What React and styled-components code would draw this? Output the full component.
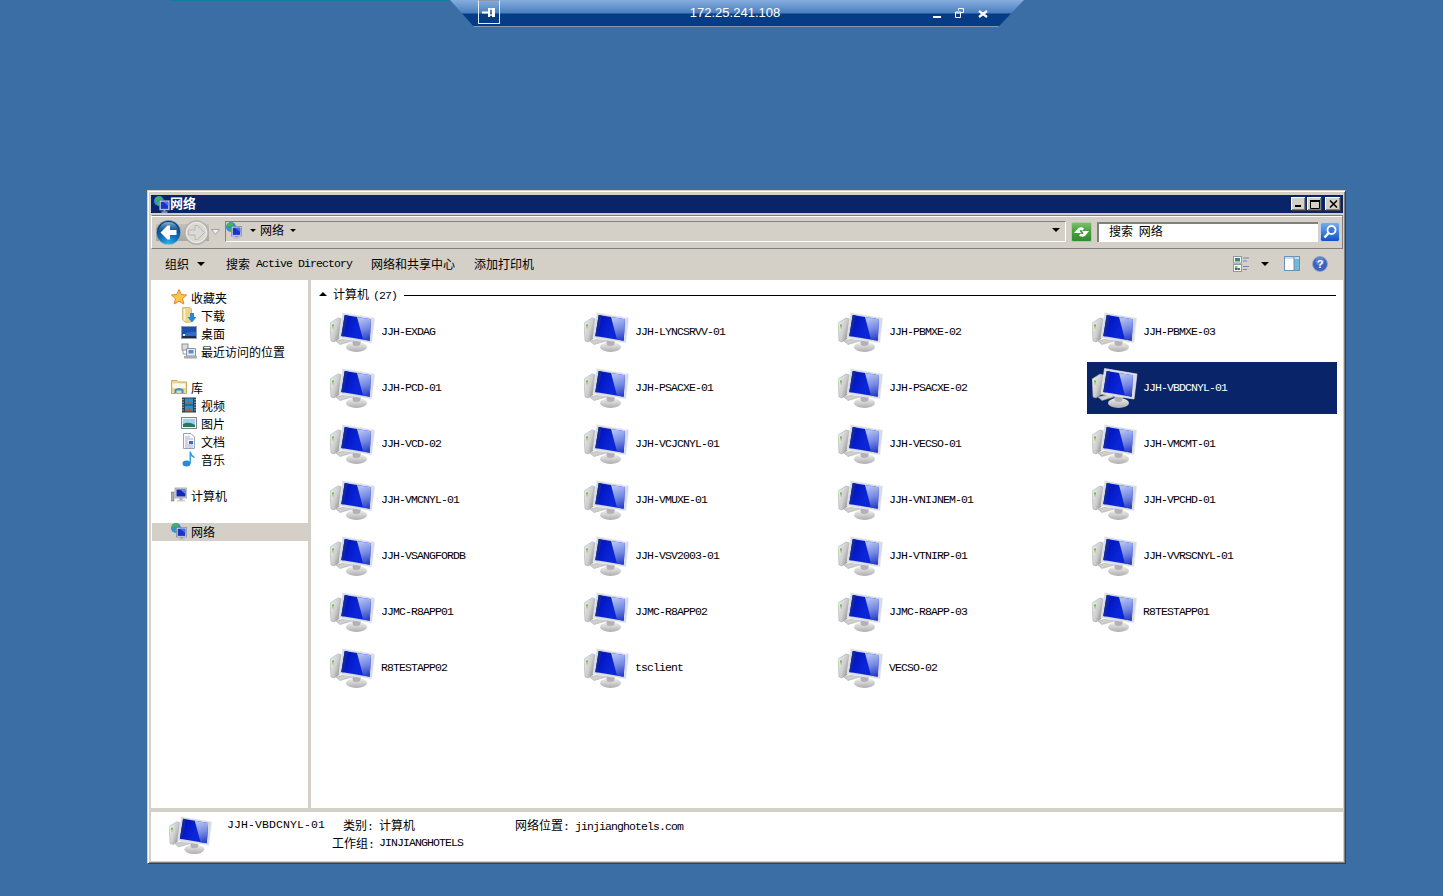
import styled, { createGlobalStyle } from 'styled-components';

const GlobalStyle = createGlobalStyle`
  html, body {
    margin: 0;
    padding: 0;
    height: 100%;
    overflow: hidden;
    background: #3a6ea5;
  }
  body {
    font-family: "Noto Sans CJK SC", "Liberation Sans", sans-serif;
    font-size: 12px;
    color: #000;
  }
`;

const computers = [
  'JJH-EXDAG', 'JJH-LYNCSRVV-01', 'JJH-PBMXE-02', 'JJH-PBMXE-03',
  'JJH-PCD-01', 'JJH-PSACXE-01', 'JJH-PSACXE-02', 'JJH-VBDCNYL-01',
  'JJH-VCD-02', 'JJH-VCJCNYL-01', 'JJH-VECSO-01', 'JJH-VMCMT-01',
  'JJH-VMCNYL-01', 'JJH-VMUXE-01', 'JJH-VNIJNEM-01', 'JJH-VPCHD-01',
  'JJH-VSANGFORDB', 'JJH-VSV2003-01', 'JJH-VTNIRP-01', 'JJH-VVRSCNYL-01',
  'JJMC-R8APP01', 'JJMC-R8APP02', 'JJMC-R8APP-03', 'R8TESTAPP01',
  'R8TESTAPP02', 'tsclient', 'VECSO-02',
];

const Desktop = styled.div`
  position: relative;
  width: 1443px;
  height: 896px;
  padding: 190px 0 0 147px;
  box-sizing: border-box;
  background: #3a6ea5;
`;

/* remote desktop connection bar, hangs over the desktop */
const TealLine = styled.div`
  position: absolute;
  left: 170px;
  top: 0;
  width: 282px;
  height: 1px;
  background: #0f7f96;
`;

const ConnectionBar = styled.div`
  position: absolute;
  left: 450px;
  top: 0;
  width: 574px;
  height: 27px;
  clip-path: polygon(0 0, 100% 0, 95.5% 100%, 4.2% 100%);
  background: linear-gradient(#86addf 0, #6b98d0 6px, #4a7fbf 13px, #063c85 14px, #063c85 26px, #8a97ad 26px);
  display: flex;
  align-items: flex-start;
  color: #fff;
`;

const PinBox = styled.div`
  margin: 0 0 0 28px;
  width: 22px;
  height: 24px;
  border: 1px solid #e8eef6;
  border-top-color: #8c97a8;
  box-sizing: border-box;
  display: flex;
  align-items: center;
  justify-content: center;
`;

const HostName = styled.div`
  margin-left: 185px;
  width: 100px;
  text-align: center;
  font-family: "Liberation Sans", sans-serif;
  font-size: 13px;
  line-height: 25px;
`;

const BarButtons = styled.div`
  margin-left: 148px;
  display: flex;
  gap: 14px;
  padding-top: 8px;
  align-items: flex-start;
`;

const Window = styled.div`
  width: 1199px;
  height: 674px;
  box-sizing: border-box;
  background: #d4d0c8;
  border: 1px solid #d4d0c8;
  border-right-color: #404040;
  border-bottom-color: #404040;
  box-shadow: inset 1px 1px 0 #fff, inset -1px -1px 0 #808080;
  padding: 3px 2px 2px 3px;
  display: flex;
  flex-direction: column;
`;

const TitleBar = styled.div`
  height: 18px;
  margin-top: 1px;
  background: #0a246a;
  color: #fff;
  display: flex;
  align-items: center;
  padding: 0 2px 0 3px;
  flex: none;
`;

const TitleText = styled.div`
  font-weight: 700;
  font-size: 13px;
  line-height: 16px;
  margin-top: -2px;
`;

const CaptionButtons = styled.div`
  margin-left: auto;
  display: flex;
  align-items: center;
`;

const CaptionButton = styled.div`
  width: ${(p) => p.$width || 16}px;
  height: 14px;
  margin-left: ${(p) => p.$gap || 0}px;
  box-sizing: border-box;
  background: #d4d0c8;
  box-shadow: inset -1px -1px 0 #404040, inset 1px 1px 0 #fff, inset -2px -2px 0 #808080;
  display: flex;
  align-items: center;
  justify-content: center;
`;

const NavRow = styled.div`
  height: 34px;
  margin-top: 2px;
  flex: none;
  box-sizing: border-box;
  border-top: 1px solid #808080;
  border-bottom: 1px solid #808080;
  border-left: 1px solid #fff;
  border-right: 1px solid #808080;
  box-shadow: inset 0 1px 0 #fff;
  display: flex;
  align-items: center;
  padding: 0 2px 0 4px;
`;

const NavPill = styled.div`
  display: flex;
  gap: 3px;
  flex: none;
  margin-right: 2px;
  background: linear-gradient(#c4c1bb, #a9a6a1) center / 100% 17px no-repeat;
`;

const NavButton = styled.div`
  width: 25px;
  height: 25px;
  flex: none;
`;

const AddressBox = styled.div`
  margin-left: 5px;
  width: 841px;
  height: 21px;
  margin-top: -2px;
  box-sizing: border-box;
  border-top: 1px solid #808080;
  border-left: 1px solid #808080;
  border-bottom: 1px solid #fff;
  border-right: 1px solid #fff;
  display: flex;
  align-items: center;
  padding-bottom: 2px;
  flex: none;
`;

const AddressText = styled.div`
  margin: -2px 0 0 4px;
  white-space: nowrap;
`;

const Caret = styled.div`
  width: 0;
  height: 0;
  margin-left: ${(p) => p.$left || 0}px;
  border-left: ${(p) => p.$size || 3}px solid transparent;
  border-right: ${(p) => p.$size || 3}px solid transparent;
  border-top: ${(p) => p.$size || 3}px solid #000;
  flex: none;
`;

const RefreshButton = styled.div`
  width: 21px;
  height: 20px;
  margin-left: 5px;
  flex: none;
`;

const SearchBox = styled.div`
  width: 221px;
  height: 20px;
  margin-left: 5px;
  box-sizing: border-box;
  background: #fff;
  border-top: 2px solid #808080;
  border-left: 2px solid #808080;
  padding-left: 10px;
  line-height: 14px;
  word-spacing: 3px;
  flex: none;
`;

const SearchButton = styled.div`
  width: 20px;
  height: 20px;
  margin-left: 2px;
  flex: none;
`;

const ToolBar = styled.div`
  height: 31px;
  flex: none;
  display: flex;
  align-items: center;
  padding: 0 0 2px 14px;
  box-sizing: border-box;
`;

const ToolItem = styled.div`
  margin-left: ${(p) => p.$left || 0}px;
  display: flex;
  align-items: center;
  white-space: nowrap;
`;

const ToolIcons = styled.div`
  margin-left: auto;
  display: flex;
  align-items: center;
  padding-right: 15px;
`;

const Latin = styled.span`
  font-family: "Liberation Mono", monospace;
  font-size: 11.5px;
  letter-spacing: -0.9px;
  margin-left: ${(p) => p.$left || 0}px;
`;

const Body = styled.div`
  height: 528px;
  flex: none;
  display: flex;
`;

const Sidebar = styled.div`
  width: 157px;
  flex: none;
  background: #fff;
  padding: 9px 0 0 1px;
  box-sizing: border-box;
`;

const NavGroup = styled.div`
  margin-bottom: 18px;
`;

const NavEntry = styled.div`
  height: 18px;
  display: flex;
  align-items: center;
  gap: 4px;
  box-sizing: border-box;
  padding-left: ${(p) => (p.$sub ? 29 : 19)}px;
  padding-bottom: 2px;
  background: ${(p) => (p.$active ? '#d4d0c8' : 'transparent')};
  white-space: nowrap;
  svg { flex: none; }
`;

const Content = styled.div`
  width: 1032px;
  margin-left: 3px;
  flex: none;
  background: #fff;
  padding: 6px 7px 0 14px;
  box-sizing: border-box;
`;

const GroupHeader = styled.div`
  height: 16px;
  display: flex;
  align-items: center;
  gap: 6px;
  white-space: nowrap;
`;

const GroupCaret = styled.div`
  width: 0;
  height: 0;
  border-left: 4px solid transparent;
  border-right: 4px solid transparent;
  border-bottom: 4px solid #000;
  margin-left: -6px;
  flex: none;
`;

const GroupTitle = styled.span`
  margin-top: -2px;
`;

const GroupRule = styled.div`
  flex: 1;
  height: 1px;
  margin: 2px 0 0 1px;
  background: #000;
`;

const TileGrid = styled.div`
  margin: 4px 0 0 0;
  display: grid;
  grid-template-columns: repeat(4, 250px);
  grid-auto-rows: 52px;
  gap: 4px;
`;

const Tile = styled.div`
  display: flex;
  align-items: center;
  padding-left: 5px;
  background: ${(p) => (p.$selected ? '#0a246a' : 'transparent')};
  color: ${(p) => (p.$selected ? '#fff' : '#000')};
  white-space: nowrap;
`;

const TileLabel = styled(Latin)`
  margin-left: 5px;
  margin-top: -1px;
`;

const Splitter = styled.div`
  height: 4px;
  flex: none;
`;

const Details = styled.div`
  flex: 1;
  background: #fff;
  display: grid;
  grid-template-columns: 58px 105px 47px 136px 1fr;
  grid-template-rows: 18px 18px;
  align-content: start;
  padding: 4px 0 0 18px;
  white-space: nowrap;
  line-height: 18px;
`;

const DetailIcon = styled.div`
  grid-row: 1 / span 2;
`;

const DetailName = styled(Latin)`
  padding-top: 0;
  letter-spacing: 0.1px;
`;

const DetailLabel = styled.div`
  text-align: right;
  padding-right: 6px;
  grid-column: ${(p) => p.$col || 'auto'};
`;

function Computer({ width = 46, height = 41 }) {
  return (
    <svg width={width} height={height} viewBox="0 0 46 41" style={{ flex: 'none' }}>
      <defs>
        <linearGradient id="screen" x1="0" y1="0" x2="1" y2="0.4">
          <stop offset="0" stopColor="#07148a" />
          <stop offset="0.3" stopColor="#0418c4" />
          <stop offset="0.65" stopColor="#0a26d8" />
        </linearGradient>
        <linearGradient id="sheen" x1="0.3" y1="0" x2="0.5" y2="1">
          <stop offset="0" stopColor="#b8c6f4" />
          <stop offset="0.55" stopColor="#7488e4" />
          <stop offset="1" stopColor="#2a40c8" />
        </linearGradient>
        <linearGradient id="case" x1="0" y1="0" x2="1" y2="0.6">
          <stop offset="0" stopColor="#f4f4f4" />
          <stop offset="0.6" stopColor="#cccccc" />
          <stop offset="1" stopColor="#8c8c8c" />
        </linearGradient>
        <linearGradient id="foot" x1="0" y1="0" x2="0" y2="1">
          <stop offset="0" stopColor="#f0f0f0" />
          <stop offset="1" stopColor="#aeaeae" />
        </linearGradient>
      </defs>
      <path d="M0 11 L8 6 L12 7 L10 26 L4 30 L1 29 Z" fill="url(#case)" stroke="#a0a0a0" strokeWidth="0.5" />
      <rect x="2" y="12.5" width="2" height="2" fill="#58c058" />
      <rect x="2" y="15" width="2" height="1.5" fill="#d8c860" />
      <path d="M6 29 L18 26 L22 29 L10 32.5 Z" fill="#cfcfcf" stroke="#9c9c9c" strokeWidth="0.5" />
      <ellipse cx="26.5" cy="35" rx="10.5" ry="5" fill="url(#foot)" />
      <path d="M22 27 L31 29 L30 33 Q26 35 23 33 Z" fill="#b2b2b2" />
      <path d="M12.5 0.5 L45 6 L42 31 L9 26 Z" fill="#d8dce2" stroke="#f4f6f8" strokeWidth="0.6" />
      <path d="M14.7 3 L41 7.3 L39.7 28.7 L11.3 24 Z" fill="url(#screen)" />
      <path d="M27 5 L41 7.3 L39.7 28.7 L33 27.6 Z" fill="url(#sheen)" />
      <path d="M14.7 3 L18 3.5 L13.5 24.4 L11.3 24 Z" fill="#1228a0" />
    </svg>
  );
}

function NetworkIcon() {
  return (
    <svg width="16" height="17" viewBox="0 0 16 17" style={{ flex: 'none' }}>
      <circle cx="5" cy="5" r="5" fill="#2f8fd8" />
      <path d="M1 2.5 Q4 -0.5 7.5 1 L6.5 4 L3.5 3.5 L2.5 6 Z" fill="#48b83c" />
      <path d="M3 7 L6 6 L6 9.5 L4.5 9.5 Z" fill="#48b83c" />
      <rect x="5.5" y="4.5" width="10" height="9.5" fill="#dfe4ea" stroke="#72809a" strokeWidth="0.7" />
      <rect x="6.7" y="5.7" width="7.6" height="7.2" fill="#1a34c8" />
      <path d="M9 5.7 H14.3 V10 Z" fill="#4c6ce8" />
      <rect x="9.5" y="14" width="2" height="1.5" fill="#8c96a8" />
      <rect x="7.5" y="15.5" width="6" height="1.2" fill="#b4bac6" />
    </svg>
  );
}

function StarIcon() {
  return (
    <svg width="16" height="16" viewBox="0 0 16 16">
      <path d="M8 0.5 L10.2 5.5 L15.6 6 L11.5 9.6 L12.8 15 L8 12.2 L3.2 15 L4.5 9.6 L0.4 6 L5.8 5.5 Z" fill="#fbc84a" stroke="#e8822a" strokeWidth="1" />
    </svg>
  );
}

function DownloadIcon() {
  return (
    <svg width="16" height="16" viewBox="0 0 16 16">
      <path d="M1.5 0.5 L9 0.5 L10.5 2 L10.5 15 L5 15.5 L1.5 13 Z" fill="#ecd48c" stroke="#c8a860" strokeWidth="0.7" />
      <path d="M3.5 2 L3.5 13.5" stroke="#fff4c8" strokeWidth="1.8" />
      <path d="M9 6 H13 V10 H15.5 L11 15.5 L6.5 10 H9 Z" fill="#2b86d8" />
    </svg>
  );
}

function DesktopIcon() {
  return (
    <svg width="16" height="16" viewBox="0 0 16 16">
      <rect x="0.5" y="1.5" width="15" height="12" fill="#2f6cc4" stroke="#8c9cb4" />
      <path d="M1 2 H15 V7 Q8 6 1 10 Z" fill="#1a50ac" />
      <rect x="1" y="11" width="14" height="2" fill="#1c2c48" />
      <rect x="2" y="9" width="2" height="2" fill="#e8e8f0" />
    </svg>
  );
}

function RecentIcon() {
  return (
    <svg width="16" height="16" viewBox="0 0 16 16">
      <rect x="1" y="1" width="6" height="6" fill="#d8dce0" stroke="#8c9298" />
      <path d="M5.5 5.5 H14.5 V13 H5.5 Z" fill="#e8ecf0" stroke="#8c9298" />
      <rect x="7.5" y="7" width="5" height="3.5" fill="#5a90c8" />
      <rect x="3" y="13" width="13" height="2.5" fill="#a8acb0" />
      <path d="M2 7 V11 H5" fill="none" stroke="#9aa0a8" />
    </svg>
  );
}

function LibraryIcon() {
  return (
    <svg width="16" height="16" viewBox="0 0 16 16">
      <path d="M0.5 1.5 H6 L7.5 3 H15.5 V14.5 H0.5 Z" fill="#f0d890" stroke="#c8a860" />
      <path d="M1.5 4.5 H14.5 V9 H1.5 Z" fill="#fffbe8" />
      <path d="M3.5 14 V10.5 Q8 7.5 12.5 10.5 V14 H10.5 V11.5 H5.5 V14 Z" fill="#3a8ed0" />
    </svg>
  );
}

function VideoIcon() {
  return (
    <svg width="16" height="16" viewBox="0 0 16 16">
      <rect x="1" y="0.5" width="14" height="15" fill="#26424c" />
      <rect x="4" y="1.5" width="8" height="6" fill="#2f8ed0" />
      <rect x="4" y="8.5" width="8" height="6" fill="#2f8ed0" />
      <path d="M4 7 L8 4 L12 7 Z M4 14 L8 11 L12 14 Z" fill="#a8603a" />
      <path d="M2 2 V14 M14 2 V14" stroke="#e8e8e8" strokeDasharray="1.2 1.4" />
    </svg>
  );
}

function PictureIcon() {
  return (
    <svg width="16" height="16" viewBox="0 0 16 16">
      <rect x="0.5" y="2.5" width="15" height="11" fill="#eef0f2" stroke="#7c8a98" />
      <rect x="2" y="4" width="12" height="8" fill="#a4d0e8" />
      <path d="M2 12 V9 Q8 6 14 10 V12 Z" fill="#2a7a58" />
    </svg>
  );
}

function DocIcon() {
  return (
    <svg width="16" height="16" viewBox="0 0 16 16">
      <path d="M2.5 0.5 H10 L13.5 4 V15.5 H2.5 Z" fill="#fafafc" stroke="#9ca4b4" />
      <path d="M4 4 H9 M4 6 H12 M4 12 H12 M4 14 H12" stroke="#a4acc8" />
      <rect x="8" y="8" width="4" height="3" fill="#2f6ec8" />
      <path d="M4 8 H7 M4 10 H7" stroke="#a4acc8" />
    </svg>
  );
}

function MusicIcon() {
  return (
    <svg width="16" height="16" viewBox="0 0 16 16">
      <ellipse cx="5.5" cy="12.5" rx="4" ry="3" fill="#2a8ad8" />
      <path d="M8.5 12 V0.5 H9.8 Q10.5 4 14 6 L13 7 Q11 6 10 5 V12.5 Z" fill="#3a9ae0" />
    </svg>
  );
}

function SmallComputerIcon() {
  return (
    <svg width="16" height="16" viewBox="0 0 16 16">
      <rect x="0.5" y="5" width="2.5" height="9" fill="#a8acb0" stroke="#686c70" strokeWidth="0.5" />
      <rect x="4" y="1" width="12" height="10" fill="#d4d8dc" stroke="#8c9298" strokeWidth="0.7" />
      <rect x="5.5" y="2.5" width="9" height="7" fill="#1428b8" />
      <path d="M9 2.5 H14.5 V7 Z" fill="#7088e0" />
      <rect x="8.5" y="11" width="3" height="2" fill="#a8acb0" />
      <rect x="6" y="13" width="8" height="1.5" fill="#c8ccd0" />
    </svg>
  );
}

function BackIcon() {
  return (
    <svg width="25" height="25" viewBox="0 0 25 25">
      <defs>
        <radialGradient id="backFill" cx="0.5" cy="1" r="0.85">
          <stop offset="0" stopColor="#2fb4f0" />
          <stop offset="0.5" stopColor="#0a72b8" />
          <stop offset="1" stopColor="#083f78" />
        </radialGradient>
        <linearGradient id="backGloss" x1="0" y1="0" x2="0" y2="1">
          <stop offset="0" stopColor="#a4c0d8" stopOpacity="0.9" />
          <stop offset="1" stopColor="#3a80b8" stopOpacity="0.2" />
        </linearGradient>
      </defs>
      <circle cx="12.5" cy="12.5" r="12.2" fill="url(#backFill)" stroke="#b8c0c4" strokeWidth="0.6" />
      <path d="M2.5 11 Q4 2 12.5 2 Q21 2 22.5 11 Q12.5 7 2.5 11 Z" fill="url(#backGloss)" />
      <path d="M4.5 12.5 L11.5 5.5 H14 V10 H20.5 V15 H14 V19.5 H11.5 Z" fill="#fff" />
    </svg>
  );
}

function ForwardIcon() {
  return (
    <svg width="25" height="25" viewBox="0 0 25 25">
      <circle cx="12.5" cy="12.5" r="11.7" fill="#cfccc6" stroke="#b0aeaa" strokeWidth="1.2" />
      <circle cx="12.5" cy="12.5" r="10" fill="#dbd8d2" stroke="#f2f2f0" strokeWidth="1" />
      <path d="M20.5 12.5 L13.5 5.5 H11 V10 H4.5 V15 H11 V19.5 H13.5 Z" fill="#dcdad6" stroke="#b0aeaa" strokeWidth="0.8" />
    </svg>
  );
}

function RefreshIcon() {
  return (
    <svg width="21" height="20" viewBox="0 0 21 20">
      <defs>
        <linearGradient id="refreshFill" x1="0" y1="0" x2="0" y2="1">
          <stop offset="0" stopColor="#7cc070" />
          <stop offset="0.5" stopColor="#46a03c" />
          <stop offset="1" stopColor="#2f8a2c" />
        </linearGradient>
      </defs>
      <rect x="0.5" y="0.5" width="20" height="19" rx="1.5" fill="url(#refreshFill)" stroke="#a8d0a0" />
      <path d="M3 11 L7.5 6 Q11 4.5 13 6.5 L11.5 8.5 Q9.5 7.5 8.5 8.5 L10 11 Z" fill="#fff" />
      <path d="M18 9 L14 14 Q10.5 15.5 8 13.5 L9.5 11.5 Q11 12.5 12.5 11.5 L11 9 Z" fill="#fff" />
    </svg>
  );
}

function SearchGoIcon() {
  return (
    <svg width="20" height="20" viewBox="0 0 20 20">
      <defs>
        <linearGradient id="goFill" x1="0" y1="0" x2="0" y2="1">
          <stop offset="0" stopColor="#7ab0ea" />
          <stop offset="1" stopColor="#0c50c8" />
        </linearGradient>
      </defs>
      <rect x="0.5" y="0.5" width="19" height="19" rx="2" fill="url(#goFill)" stroke="#c0d0e8" />
      <circle cx="11.5" cy="8" r="4" fill="#3c78d0" stroke="#fff" strokeWidth="1.8" />
      <path d="M8.5 11 L4.5 15.5" stroke="#fff" strokeWidth="2.4" />
    </svg>
  );
}

function ViewsIcon() {
  return (
    <svg width="18" height="16" viewBox="0 0 18 16">
      <rect x="0.5" y="0.5" width="8" height="6.5" fill="#f4f6f8" stroke="#8c98a8" />
      <rect x="2" y="2" width="5" height="3.5" fill="#3a8a78" />
      <rect x="0.5" y="8.5" width="8" height="7" fill="#f4f6f8" stroke="#8c98a8" />
      <rect x="2" y="10" width="2.5" height="2" fill="#d8a030" />
      <rect x="4.5" y="12" width="2.5" height="2" fill="#3a8a38" />
      <rect x="2" y="12" width="2.5" height="2" fill="#3a60c8" />
      <path d="M10 2 H16 M10 5 H14 M10 10.5 H16 M10 13.5 H14" stroke="#7088b8" />
    </svg>
  );
}

function PaneIcon() {
  return (
    <svg width="16" height="15" viewBox="0 0 16 15">
      <rect x="0.5" y="0.5" width="15" height="14" fill="#fff" stroke="#6c90b8" />
      <rect x="1" y="1" width="14" height="2" fill="#c8dcec" />
      <rect x="10" y="3" width="5" height="11" fill="#70b8d8" />
      <path d="M10 1 V14" stroke="#6c90b8" />
    </svg>
  );
}

function HelpIcon() {
  return (
    <svg width="16" height="16" viewBox="0 0 16 16">
      <circle cx="8" cy="8" r="7.5" fill="#3a62c0" stroke="#98a4bc" />
      <circle cx="8" cy="5" r="4.5" fill="#7f9ee0" opacity="0.5" />
      <text x="8" y="12" textAnchor="middle" fill="#fff" fontSize="11" fontWeight="700" fontFamily="Liberation Sans, sans-serif">?</text>
    </svg>
  );
}

export default function App() {
  return (
    <Desktop>
      <GlobalStyle />
      <TealLine />
      <ConnectionBar>
        <PinBox>
          <svg width="14" height="11" viewBox="0 0 14 11">
            <path d="M0 5.5 H7" stroke="#fff" strokeWidth="2" />
            <rect x="6" y="1" width="2" height="9" fill="#fff" />
            <rect x="10" y="1" width="3" height="9" fill="#fff" />
            <path d="M8 2 H10 M8 8 H10" stroke="#fff" strokeWidth="1.5" />
          </svg>
        </PinBox>
        <HostName>172.25.241.108</HostName>
        <BarButtons>
          <svg width="8" height="10" viewBox="0 0 8 10"><rect x="0" y="8" width="8" height="2" fill="#fff" /></svg>
          <svg width="9" height="10" viewBox="0 0 9 10"><path d="M3.5 2.5 V0.5 H8.5 V4.5 H6 M0.5 4 H5.5 V9.5 H0.5 Z M0.5 5 H5.5" stroke="#fff" fill="none" /></svg>
          <svg width="10" height="8" viewBox="0 0 10 8" style={{ marginTop: 2 }}><path d="M1 1 L9 7 M9 1 L1 7" stroke="#fff" strokeWidth="2.2" /></svg>
        </BarButtons>
      </ConnectionBar>

      <Window>
        <TitleBar>
          <NetworkIcon />
          <TitleText>网络</TitleText>
          <CaptionButtons>
            <CaptionButton $width={15}>
              <svg width="8" height="8" viewBox="0 0 8 8"><rect x="0" y="5" width="6" height="2" fill="#000" /></svg>
            </CaptionButton>
            <CaptionButton $width={15} $gap={1}>
              <svg width="10" height="9" viewBox="0 0 10 9"><path d="M0.5 1 H9.5 V8.5 H0.5 Z" fill="none" stroke="#000" /><rect x="0" y="0" width="10" height="2" fill="#000" /></svg>
            </CaptionButton>
            <CaptionButton $gap={3}>
              <svg width="9" height="8" viewBox="0 0 9 8"><path d="M1 0.5 L8 7.5 M8 0.5 L1 7.5" stroke="#000" strokeWidth="1.5" /></svg>
            </CaptionButton>
          </CaptionButtons>
        </TitleBar>

        <NavRow>
          <NavPill>
            <NavButton><BackIcon /></NavButton>
            <NavButton><ForwardIcon /></NavButton>
          </NavPill>
          <svg width="9" height="6" viewBox="0 0 9 6" style={{ flex: 'none' }}>
            <path d="M0.5 0.5 H8.5 L4.5 5.5 Z" fill="#f0f0ee" stroke="#a0a0a0" />
          </svg>
          <AddressBox>
            <NetworkIcon />
            <Caret $left={8} />
            <AddressText>网络</AddressText>
            <Caret $left={6} />
            <Caret $left={756} $size={4} />
          </AddressBox>
          <RefreshButton><RefreshIcon /></RefreshButton>
          <SearchBox>搜索 网络</SearchBox>
          <SearchButton><SearchGoIcon /></SearchButton>
        </NavRow>

        <ToolBar>
          <ToolItem>组织<Caret $left={8} $size={4} /></ToolItem>
          <ToolItem $left={21}>搜索<Latin $left={6}>Active Directory</Latin></ToolItem>
          <ToolItem $left={19}>网络和共享中心</ToolItem>
          <ToolItem $left={19}>添加打印机</ToolItem>
          <ToolIcons>
            <ViewsIcon />
            <Caret $left={10} $size={4} />
            <ToolItem $left={15}><PaneIcon /></ToolItem>
            <ToolItem $left={12}><HelpIcon /></ToolItem>
          </ToolIcons>
        </ToolBar>

        <Body>
          <Sidebar>
            <NavGroup>
              <NavEntry><StarIcon />收藏夹</NavEntry>
              <NavEntry $sub><DownloadIcon />下载</NavEntry>
              <NavEntry $sub><DesktopIcon />桌面</NavEntry>
              <NavEntry $sub><RecentIcon />最近访问的位置</NavEntry>
            </NavGroup>
            <NavGroup>
              <NavEntry><LibraryIcon />库</NavEntry>
              <NavEntry $sub><VideoIcon />视频</NavEntry>
              <NavEntry $sub><PictureIcon />图片</NavEntry>
              <NavEntry $sub><DocIcon />文档</NavEntry>
              <NavEntry $sub><MusicIcon />音乐</NavEntry>
            </NavGroup>
            <NavGroup>
              <NavEntry><SmallComputerIcon />计算机</NavEntry>
            </NavGroup>
            <NavEntry $active><NetworkIcon />网络</NavEntry>
          </Sidebar>
          <Content>
            <GroupHeader>
              <GroupCaret />
              <GroupTitle>计算机<Latin $left={4}>(27)</Latin></GroupTitle>
              <GroupRule />
            </GroupHeader>
            <TileGrid>
              {computers.map((name) => (
                <Tile key={name} $selected={name === 'JJH-VBDCNYL-01'}>
                  <Computer />
                  <TileLabel>{name}</TileLabel>
                </Tile>
              ))}
            </TileGrid>
          </Content>
        </Body>

        <Splitter />

        <Details>
          <DetailIcon><Computer width={44} height={39} /></DetailIcon>
          <DetailName>JJH-VBDCNYL-01</DetailName>
          <DetailLabel>类别<Latin>:</Latin></DetailLabel>
          <span>计算机</span>
          <span>网络位置<Latin>: jinjianghotels.com</Latin></span>
          <DetailLabel $col="3">工作组<Latin>:</Latin></DetailLabel>
          <Latin>JINJIANGHOTELS</Latin>
        </Details>
      </Window>
    </Desktop>
  );
}
